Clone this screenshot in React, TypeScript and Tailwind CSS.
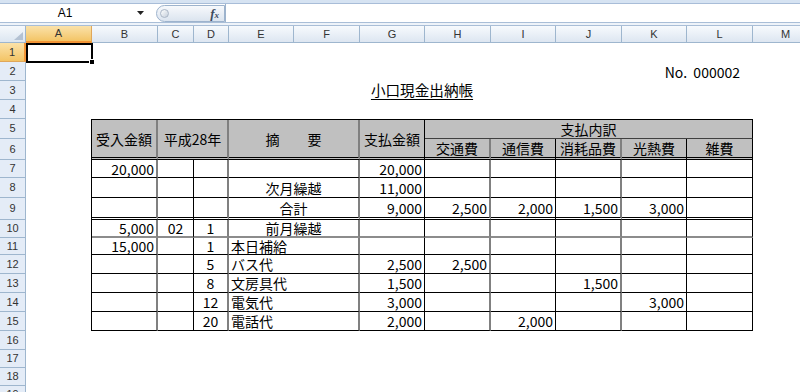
import React from "react";

type Col = { label: string; w: string };

const COLUMNS: Col[] = [
  { label: "A", w: "w-[66px]" },
  { label: "B", w: "w-[66px]" },
  { label: "C", w: "w-[36px]" },
  { label: "D", w: "w-[35px]" },
  { label: "E", w: "w-[65px]" },
  { label: "F", w: "w-[66px]" },
  { label: "G", w: "w-[65px]" },
  { label: "H", w: "w-[66px]" },
  { label: "I", w: "w-[65px]" },
  { label: "J", w: "w-[66px]" },
  { label: "K", w: "w-[65px]" },
  { label: "L", w: "w-[66px]" },
  { label: "M", w: "w-[66px]" },
];

const ROW_HEADS: { n: number; h: string }[] = [
  { n: 1, h: "h-[19px]" },
  { n: 2, h: "h-[19px]" },
  { n: 3, h: "h-[19px]" },
  { n: 4, h: "h-[19px]" },
  { n: 5, h: "h-[20px]" },
  { n: 6, h: "h-[21px]" },
  { n: 7, h: "h-[18px]" },
  { n: 8, h: "h-[20px]" },
  { n: 9, h: "h-[22px]" },
  { n: 10, h: "h-[18px]" },
  { n: 11, h: "h-[17px]" },
  { n: 12, h: "h-[19px]" },
  { n: 13, h: "h-[19px]" },
  { n: 14, h: "h-[19px]" },
  { n: 15, h: "h-[19px]" },
  { n: 16, h: "h-[19px]" },
  { n: 17, h: "h-[18px]" },
  { n: 18, h: "h-[18px]" },
  { n: 19, h: "h-[18px]" },
];

// right border of each table column (B, C, D, E:F, G, H, I, J, K, L)
const COL_BORDER = [
  "border-r-2 border-r-[#808080]",
  "border-r border-r-black",
  "border-r-2 border-r-[#808080]",
  "border-r-2 border-r-[#808080]",
  "border-r border-r-black",
  "border-r-2 border-r-[#808080]",
  "border-r border-r-black",
  "border-r-2 border-r-[#808080]",
  "border-r border-r-black",
  "border-r border-r-black",
];

type Row = {
  cells: string[];
  bottom: string;
  textAlign: "left" | "center";
};

const ROWS: Row[] = [
  { cells: ["20,000", "", "", "", "20,000", "", "", "", "", ""], bottom: "border-b border-b-black", textAlign: "center" },
  { cells: ["", "", "", "次月繰越", "11,000", "", "", "", "", ""], bottom: "border-b border-b-black", textAlign: "center" },
  {
    cells: ["", "", "", "合計", "9,000", "2,500", "2,000", "1,500", "3,000", ""],
    bottom: "border-b-[3px] border-b-black border-double",
    textAlign: "center",
  },
  { cells: ["5,000", "02", "1", "前月繰越", "", "", "", "", "", ""], bottom: "border-b-2 border-b-[#8c8c8c]", textAlign: "center" },
  { cells: ["15,000", "", "1", "本日補給", "", "", "", "", "", ""], bottom: "border-b border-b-black", textAlign: "left" },
  { cells: ["", "", "5", "バス代", "2,500", "2,500", "", "", "", ""], bottom: "border-b border-b-black", textAlign: "left" },
  { cells: ["", "", "8", "文房具代", "1,500", "", "", "1,500", "", ""], bottom: "border-b border-b-black", textAlign: "left" },
  { cells: ["", "", "12", "電気代", "3,000", "", "", "", "3,000", ""], bottom: "border-b border-b-black", textAlign: "left" },
  { cells: ["", "", "20", "電話代", "2,000", "", "2,000", "", "", ""], bottom: "border-b border-b-black", textAlign: "left" },
];

const SUB_HEADS = ["交通費", "通信費", "消耗品費", "光熱費", "雑費"];
const SUB_START = ["col-start-6", "col-start-7", "col-start-8", "col-start-9", "col-start-10"];

const FormulaBar = () => (
  <div className="flex flex-col">
    <div className="h-[4px] border-b border-b-[#a8bdd8] bg-[#d6e3f2]" />
    <div className="flex h-[18px] items-center bg-white">
      <div className="w-[130px] text-center font-['Liberation_Sans',sans-serif] text-[12px] text-black">A1</div>
      <div className="flex w-[26px] justify-center pr-[6px]">
        <svg width="7" height="4" viewBox="0 0 7 4">
          <polygon points="0,0 7,0 3.5,4" fill="#222" />
        </svg>
      </div>
      <div className="flex h-[17px] w-[69px] items-center justify-between rounded-l-[9px] border border-[#9db3cd] bg-gradient-to-b from-[#f7f9fc] to-[#dbe4ef] pl-[3px] pr-[5px]">
        <span className="h-[9px] w-[9px] rounded-full border border-[#aab6c6] bg-gradient-to-br from-white to-[#c5cfdb]" />
        <span className="font-['Liberation_Serif',serif] text-[13px] font-bold italic leading-none text-[#3d4a5c]">
          f<span className="text-[9px]">x</span>
        </span>
      </div>
      <div className="h-full flex-1 border-l border-l-[#9db3cd] bg-white" />
    </div>
    <div className="h-[4px] border-y border-y-[#a9bed7] bg-[#eef3f9]" />
  </div>
);

const ColumnHeaders = () => (
  <div className="flex h-[17px] font-['Liberation_Sans',sans-serif] text-[11px]">
    <div className="flex w-[26px] shrink-0 items-end justify-end border-b border-r border-[#9eb6ce] bg-gradient-to-b from-[#f6f9fc] to-[#dce6f1] pb-[2px] pr-[2px]">
      <svg width="9" height="8" viewBox="0 0 9 8">
        <polygon points="9,0 9,8 0,8" fill="#b4c2d3" />
      </svg>
    </div>
    {COLUMNS.map((c) =>
      c.label === "A" ? (
        <div
          key={c.label}
          className={`${c.w} flex shrink-0 items-center justify-center border-b-2 border-r border-b-[#f29436] border-r-[#e0a75a] bg-gradient-to-b from-[#fbe2a9] to-[#f3c464] text-[#333]`}
        >
          {c.label}
        </div>
      ) : (
        <div
          key={c.label}
          className={`${c.w} flex shrink-0 items-center justify-center border-b border-r border-[#9eb6ce] bg-gradient-to-b from-[#f7fafd] to-[#dde6f1] text-[#333]`}
        >
          {c.label}
        </div>
      )
    )}
  </div>
);

const RowHeaders = () => (
  <div className="flex w-[26px] shrink-0 flex-col font-['Liberation_Sans',sans-serif] text-[11px] leading-none text-[#333]">
    {ROW_HEADS.map((r) =>
      r.n === 1 ? (
        <div
          key={r.n}
          className={`${r.h} flex shrink-0 items-center justify-center border-b border-r-2 border-b-[#e0a75a] border-r-[#f29436] bg-gradient-to-b from-[#fbe2a9] to-[#f3c464]`}
        >
          {r.n}
        </div>
      ) : (
        <div
          key={r.n}
          className={`${r.h} flex shrink-0 items-center justify-center border-b border-r border-[#9eb6ce] bg-[#e4ecf7]`}
        >
          {r.n}
        </div>
      )
    )}
  </div>
);

const headCell = "flex items-center justify-center bg-[#c0c0c0] text-black";

const CashBook = () => (
  <div className="ml-[65px] grid w-[662px] grid-cols-[66px_36px_35px_131px_65px_66px_65px_66px_65px_66px] grid-rows-[19px_21px_18px_20px_22px_18px_17px_19px_19px_19px_19px] border-l border-t border-black text-[14px] leading-none">
    <div className={`${headCell} col-start-1 row-span-2 row-start-1 border-b-[3px] border-double border-b-black ${COL_BORDER[0]}`}>
      受入金額
    </div>
    <div className={`${headCell} col-span-2 col-start-2 row-span-2 row-start-1 border-b-[3px] border-double border-b-black ${COL_BORDER[2]}`}>
      平成28年
    </div>
    <div className={`${headCell} col-start-4 row-span-2 row-start-1 whitespace-pre border-b-[3px] border-double border-b-black ${COL_BORDER[3]}`}>
      摘　　要
    </div>
    <div className={`${headCell} col-start-5 row-span-2 row-start-1 border-b-[3px] border-double border-b-black ${COL_BORDER[4]}`}>
      支払金額
    </div>
    <div className={`${headCell} col-span-5 col-start-6 row-start-1 border-b border-r border-b-[#404040] border-r-black`}>
      支払内訳
    </div>
    {SUB_HEADS.map((s, i) => (
      <div
        key={s}
        className={`${headCell} ${SUB_START[i]} row-start-2 border-b-[3px] border-double border-b-black ${COL_BORDER[i + 5]}`}
      >
        {s}
      </div>
    ))}

    {ROWS.map((row, r) =>
      row.cells.map((text, c) => {
        let align = "justify-end pr-[2px]";
        if (c === 1 || c === 2) align = "justify-center";
        if (c === 3) align = row.textAlign === "center" ? "justify-center" : "justify-start pl-[2px]";
        return (
          <div key={`${r}-${c}`} className={`flex items-center bg-white text-black ${align} ${row.bottom} ${COL_BORDER[c]}`}>
            {text}
          </div>
        );
      })
    )}
  </div>
);

export default function App() {
  return (
    <div className="relative h-[392px] w-[800px] overflow-hidden bg-white font-['Noto_Sans_CJK_JP',sans-serif]">
      <FormulaBar />
      <ColumnHeaders />
      <div className="flex">
        <RowHeaders />
        <div className="relative flex-1">
          <div className="grid grid-cols-[66px_66px_36px_35px_65px_66px_65px_66px_65px_66px_65px_66px] grid-rows-[19px_19px_19px_19px] text-black">
            <div className="col-span-2 col-start-11 row-start-2 flex items-center justify-end whitespace-pre pr-[13px] text-[14px] leading-none">
              No.  000002
            </div>
            <div className="col-span-4 col-start-6 row-start-3 flex items-center justify-center pr-[6px] text-[14.6px] leading-none">
              <span className="underline underline-offset-[3px]">小口現金出納帳</span>
            </div>
          </div>
          <CashBook />
          <div className="absolute left-0 top-0 h-[20px] w-[67px] border-2 border-black">
            <div className="absolute -bottom-[4px] -right-[4px] h-[6px] w-[6px] border border-white bg-black" />
          </div>
        </div>
      </div>
    </div>
  );
}
